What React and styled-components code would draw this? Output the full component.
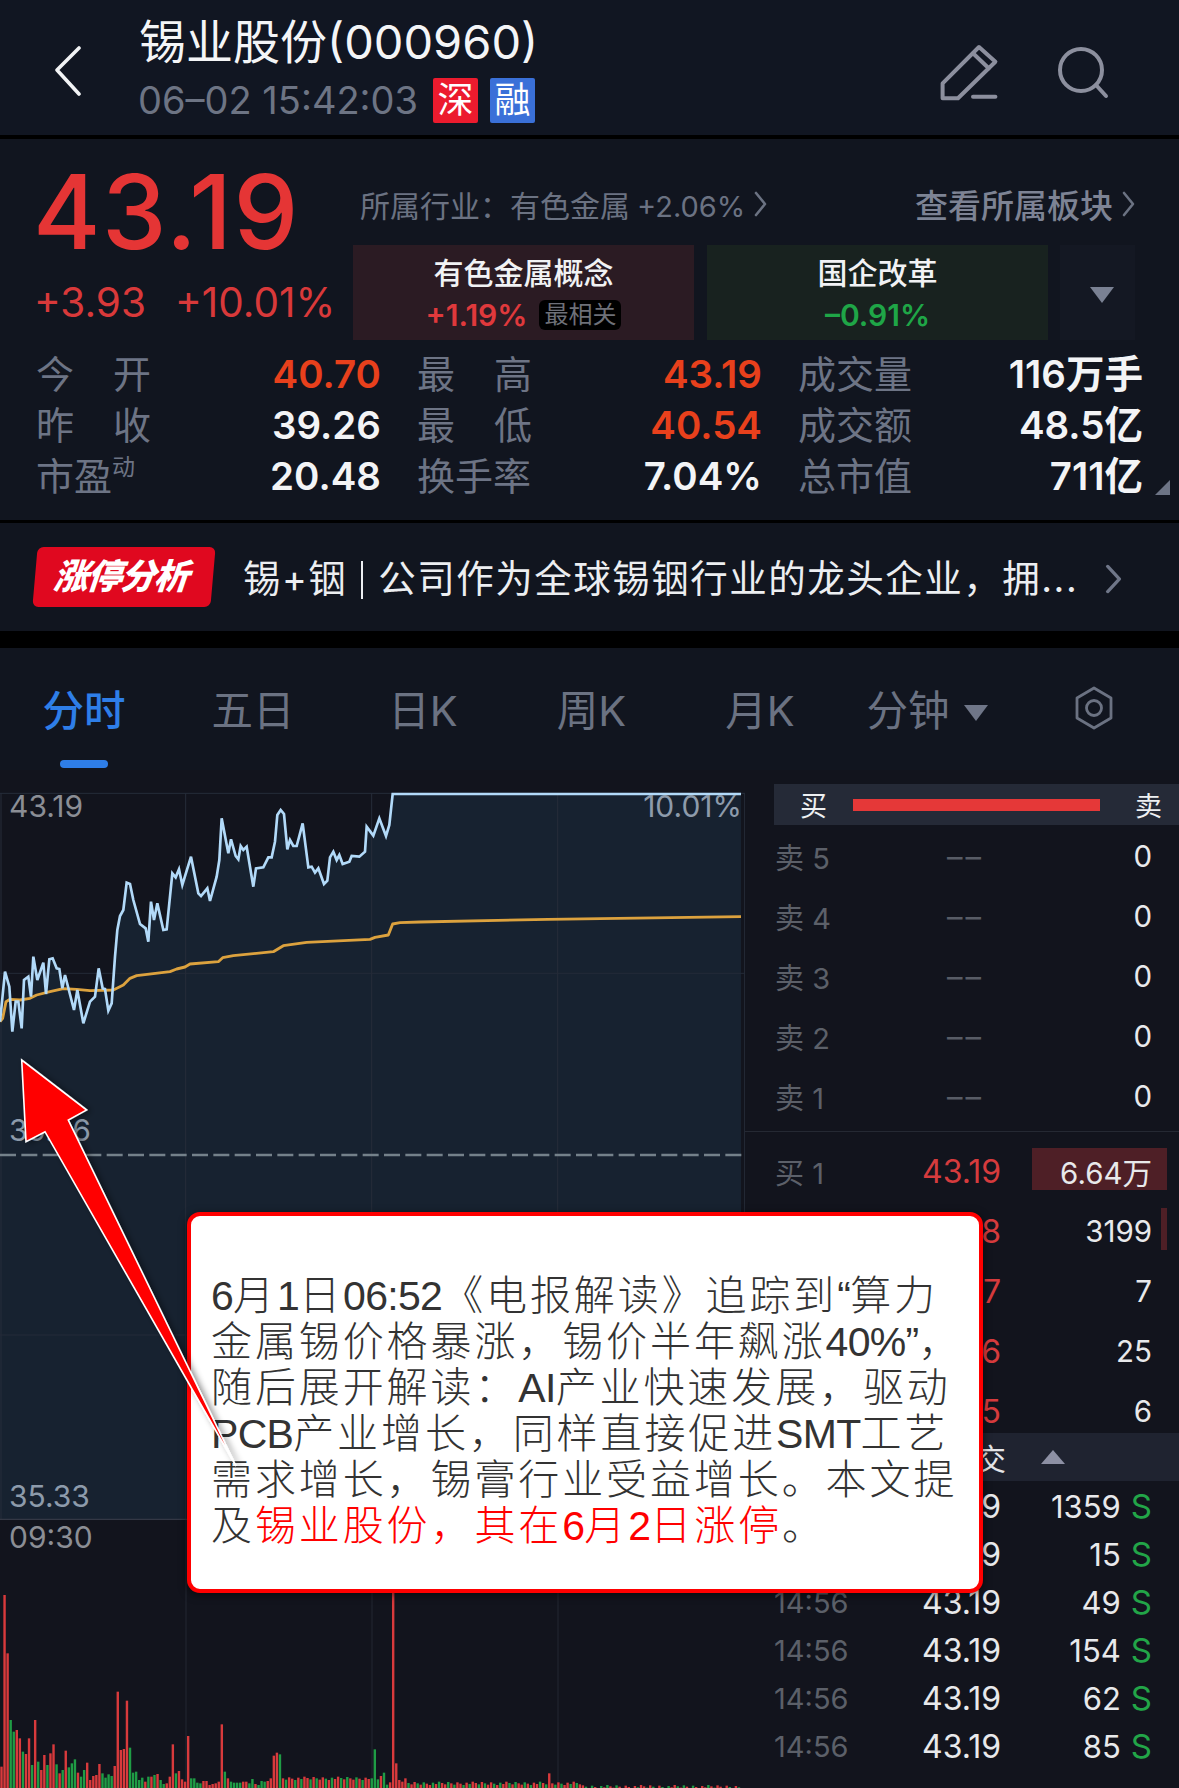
import React from "react";
import styled, { createGlobalStyle } from "styled-components";

const SANS = `Inter, "Noto Sans CJK SC", sans-serif`;

const Global = createGlobalStyle`
  html, body { margin: 0; padding: 0; background: #000; }
  body { font-family: ${SANS}; overflow-x: hidden; }
  * { box-sizing: border-box; }
`;

const Page = styled.div`
  position: relative;
  width: 1179px;
  height: 1788px;
  overflow: hidden;
  background: #000;
  display: flex;
  flex-direction: column;
`;

/* header */
const Header = styled.header`
  height: 135px;
  background: #111622;
  display: flex;
  align-items: flex-start;
`;
const BackSlot = styled.div`
  width: 139px;
  height: 135px;
  padding: 46px 0 0 54px;
`;
const HeaderTitles = styled.div`
  flex: 1;
  display: flex;
  flex-direction: column;
  padding-top: 16px;
`;
const Title = styled.div`
  color: #f4f5f7;
  font-size: 47px;
  line-height: 52px;
  white-space: nowrap;
`;
const SubRow = styled.div`
  display: flex;
  align-items: center;
  margin-top: 9px;
`;
const Timestamp = styled.span`
  color: #6d7484;
  font-size: 38px;
  line-height: 46px;
  width: 295px;
  margin-left: -1px;
  padding-right: 1px;
  white-space: nowrap;
`;
const Tag = styled.span`
  width: 45px;
  height: 45px;
  margin-right: 12px;
  background: ${(p) => p.$bg};
  color: #fff;
  font-size: 36px;
  line-height: 44px;
  text-align: center;
  border-radius: 2px;
`;
const HeaderIcons = styled.div`
  display: flex;
  align-items: flex-start;
  gap: 55px;
  padding: 44px 65px 0 0;
`;

const Rule = styled.div`
  height: ${(p) => p.$h}px;
  background: #000;
  flex: none;
`;

/* quote */
const Quote = styled.section`
  height: 381px;
  background: #11151f;
`;
const QuoteTop = styled.div`
  height: 210px;
  display: flex;
`;
const PriceCol = styled.div`
  width: 353px;
  padding: 23px 0 0 33px;
`;
const BigPrice = styled.div`
  color: #e53535;
  font-size: 103px;
  line-height: 100px;
  font-weight: 500;
  letter-spacing: 1.4px;
`;
const Changes = styled.div`
  display: flex;
  gap: 29px;
  margin-top: 16px;
  padding-left: 1px;
  color: #d9393a;
  font-size: 40.5px;
  line-height: 50px;
  white-space: nowrap;
`;
const RightCol = styled.div`
  flex: 1;
  padding-top: 46px;
`;
const InfoRow = styled.div`
  display: flex;
  align-items: center;
  justify-content: space-between;
  height: 38px;
  padding: 0 44px 0 7px;
`;
const InfoItem = styled.div`
  display: flex;
  align-items: center;
  gap: 9px;
  color: ${(p) => (p.$strong ? "#7d8394" : "#6b7282")};
  font-size: ${(p) => (p.$strong ? "33px" : "30px")};
  font-weight: ${(p) => (p.$strong ? 500 : 400)};
  white-space: nowrap;
`;
const InfoNum = styled.span`
  font-size: 29px;
  margin-left: 7px;
`;
const Cards = styled.div`
  display: flex;
  gap: 13px;
  margin-top: 22px;
`;
const Card = styled.div`
  width: 341px;
  height: 95px;
  background: ${(p) => p.$bg};
  display: flex;
  flex-direction: column;
  align-items: center;
  padding-top: 9px;
`;
const CardName = styled.div`
  color: #f1f2f4;
  font-size: 30px;
  line-height: 38px;
  font-weight: 500;
`;
const CardSub = styled.div`
  display: flex;
  align-items: center;
  gap: 12px;
  margin-top: 4px;
  color: ${(p) => p.$color};
  font-size: 30px;
  line-height: 38px;
  font-weight: 600;
`;
const Badge = styled.span`
  background: #000;
  color: #6e7078;
  font-size: 24px;
  line-height: 30px;
  font-weight: 400;
  padding: 0 5px;
  border-radius: 6px;
`;
const MoreCard = styled.div`
  width: 75px;
  height: 95px;
  margin-left: -1px;
  padding: 4px 0 0 9px;
  background: #141823;
  display: flex;
  align-items: center;
  justify-content: center;
`;
const Stats = styled.div`
  display: grid;
  grid-template-columns: repeat(3, 381px);
  padding-left: 36px;
`;
const Stat = styled.div`
  display: flex;
  align-items: center;
  height: 51px;
`;
const StatLabel = styled.div`
  width: 115px;
  display: flex;
  justify-content: space-between;
  color: #6d7485;
  font-size: 38px;
  line-height: 51px;
  position: relative;
  white-space: nowrap;
`;
const Sup = styled.sup`
  position: absolute;
  left: 76px;
  top: 4px;
  font-size: 23px;
  line-height: 24px;
  color: #6d7485;
`;
const StatValue = styled.div`
  flex: 1;
  text-align: right;
  padding-right: 36px;
  color: ${(p) => (p.$up ? "#e8401c" : "#f3f4f6")};
  font-size: 38.5px;
  line-height: 51px;
  font-weight: 600;
  white-space: nowrap;
`;
const CornerMark = styled.span`
  position: absolute;
  left: 1155px;
  top: 480px;
  width: 0;
  height: 0;
  border-style: solid;
  border-width: 0 0 15px 15px;
  border-color: transparent transparent #6d7485 transparent;
`;

/* banner */
const Banner = styled.section`
  height: 108px;
  background: #11151f;
  display: flex;
  align-items: center;
  padding-left: 35px;
`;
const Logo = styled.div`
  width: 178px;
  height: 60px;
  padding-right: 7px;
  background: #e0081f;
  border-radius: 6px;
  transform: skewX(-5deg);
  color: #fff;
  font-size: 35px;
  font-weight: 900;
  font-style: italic;
  line-height: 58px;
  text-align: center;
  letter-spacing: -1.5px;
  white-space: nowrap;
`;
const BannerText = styled.div`
  margin: 3px 0 0 30px;
  width: 862px;
  color: #eceef1;
  font-size: 37.5px;
  line-height: 50px;
  letter-spacing: 1.5px;
  white-space: nowrap;
`;
const BannerBar = styled.span`
  display: inline-block;
  width: 2px;
  height: 38px;
  margin: 0 15px 0 14px;
  vertical-align: -7px;
  background: #eceef1;
`;
const BannerMore = styled.span`
  display: flex;
  margin-top: 3px;
`;

/* tabs */
const Tabs = styled.nav`
  height: 122px;
  background: #11151f;
  display: flex;
`;
const TabItem = styled.div`
  position: relative;
  flex: none;
  width: ${(p) => p.$w || 170}px;
  height: 122px;
  padding-top: 38px;
  display: flex;
  justify-content: center;
  align-items: flex-start;
  gap: 14px;
  color: ${(p) => (p.$active ? "#2e7ee8" : "#6b7282")};
  font-size: 41.5px;
  line-height: 50px;
  font-weight: ${(p) => (p.$active ? 500 : 400)};
`;
const TabMark = styled.span`
  position: absolute;
  left: 60px;
  top: 112px;
  width: 48px;
  height: 8px;
  border-radius: 4px;
  background: #2e7ee8;
`;
const Caret = styled.span`
  width: 0;
  height: 0;
  margin-top: ${(p) => p.$top || 0}px;
  border-style: solid;
  border-width: ${(p) => (p.$up ? "0 12px 14px" : "16px 12px 0")};
  border-color: ${(p) =>
    p.$up
      ? "transparent transparent #8d90a4"
      : `${p.$color || "#6f7688"} transparent transparent`};
`;

/* market area */
const Market = styled.section`
  flex: 1;
  display: flex;
  background: #12141d;
  min-height: 0;
`;
const ChartCol = styled.div`
  width: 745px;
  flex: none;
  position: relative;
`;
const PriceChart = styled.svg`
  display: block;
  width: 745px;
  height: 750px;
`;
const AxisLabel = styled.span`
  position: absolute;
  left: ${(p) => (p.$right ? "auto" : "9px")};
  right: ${(p) => (p.$right ? "3px" : "auto")};
  top: ${(p) => p.$top}px;
  color: ${(p) => p.$color || "#8b8e95"};
  font-size: 30px;
  line-height: 34px;
`;
const VolumeChart = styled.svg`
  display: block;
  width: 745px;
  height: 268px;
`;

/* order book */
const Book = styled.div`
  flex: 1;
  padding-top: 14px;
`;
const Ratio = styled.div`
  margin-left: 29px;
  height: 41px;
  background: #252a37;
  display: flex;
  align-items: center;
  color: #eef0f2;
  font-size: 27px;
  padding: 0 17px 0 26px;
`;
const RatioBar = styled.div`
  flex: 1;
  height: 12px;
  margin: 0 35px 0 26px;
  background: #e53838;
`;
const Row = styled.div`
  position: relative;
  display: grid;
  grid-template-columns: 100px 126px 1fr;
  align-items: center;
  height: ${(p) => p.$h || 60}px;
  padding: 2px 27px 0 30px;
  font-size: 30px;
  white-space: nowrap;
`;
const RowLabel = styled.span`
  color: #5c6069;
  font-size: 29px;
`;
const TimeCell = styled.span`
  margin-left: -1px;
  color: #5c6069;
  font-size: 29px;
`;
const PriceCell = styled.span`
  position: relative;
  text-align: right;
  color: ${(p) => (p.$red ? "#d63b3d" : "#e8e9eb")};
  font-size: 32px;
`;
const DashCell = styled.span`
  text-align: right;
  color: #585c66;
  padding-right: 17px;
  font-size: 31px;
  letter-spacing: 3px;
`;
const VolCell = styled.span`
  position: relative;
  text-align: right;
  color: #e8e9eb;
  font-size: ${(p) => (p.$big ? "31px" : "29.5px")};
`;
const SideMark = styled.span`
  color: #22a548;
  margin-left: 10px;
  font-size: 33px;
`;
const Depth = styled.span`
  position: absolute;
  right: 12px;
  top: 8px;
  height: 42px;
  background: #4e1f26;
`;
const Separator = styled.div`
  height: 1px;
  margin-top: 6px;
  background: #252933;
`;
const BuySection = styled.div`
  height: 301px;
  padding-top: 8px;
`;
const TradeBand = styled.div`
  height: 48px;
  background: #1f2330;
  display: flex;
  align-items: center;
  justify-content: flex-end;
  padding-right: 114px;
  gap: 35px;
  color: #e4e5e8;
  font-size: 30px;
  white-space: nowrap;
`;

/* overlay */
const Callout = styled.div`
  position: absolute;
  left: 187px;
  top: 1212px;
  width: 796px;
  height: 381px;
  background: #fff;
  border: 4px solid #f00;
  border-radius: 13px;
  padding: 53px 0 0 20px;
  color: #333;
  font-family: "Noto Sans CJK SC", sans-serif;
  font-weight: 300;
  font-size: 41px;
  line-height: 46px;
  letter-spacing: 2.9px;
  white-space: nowrap;
  box-shadow: 0 2px 8px rgba(0, 0, 0, 0.55);
`;
const Latin = styled.span`
  font-family: "Liberation Sans", sans-serif;
  font-weight: 400;
  line-height: 0;
  letter-spacing: -0.7px;
`;
const Red = styled.span`
  color: #f00;
`;
const ArrowLayer = styled.svg`
  position: absolute;
  left: 0;
  top: 1040px;
  width: 260px;
  height: 440px;
  overflow: visible;
`;

const price = [[0,755],[15,605],[28,650],[37,785],[47,695],[55,695],[65,775],[72,630],[85,620],[93,680],[100,560],[112,630],[130,578],[138,672],[148,568],[158,565],[170,595],[178,597],[187,655],[195,615],[222,720],[232,660],[250,760],[270,695],[285,680],[296,595],[308,655],[315,657],[325,722],[335,700],[345,560],[352,480],[360,438],[370,420],[380,338],[390,342],[400,390],[420,462],[437,475],[445,515],[453,395],[462,450],[472,400],[490,480],[500,478],[517,310],[527,322],[537,298],[547,345],[573,260],[595,370],[603,378],[622,355],[630,393],[650,320],[658,270],[665,145],[685,250],[693,208],[707,258],[715,268],[722,228],[730,240],[740,230],[760,350],[768,295],[790,292],[805,262],[815,262],[825,215],[832,135],[842,120],[852,132],[862,238],[870,210],[880,228],[890,228],[908,160],[925,292],[935,290],[945,308],[955,295],[972,342],[982,332],[990,262],[1000,245],[1010,270],[1018,255],[1028,282],[1048,275],[1055,258],[1078,260],[1095,245],[1100,170],[1120,197],[1138,145],[1158,198],[1168,165],[1178,72],[2223,72]];
const avg = [[0,755],[8,745],[18,695],[30,688],[60,690],[90,685],[110,675],[150,665],[190,656],[230,658],[270,662],[340,660],[370,645],[390,625],[410,617],[510,605],[530,597],[555,591],[570,582],[655,575],[668,563],[700,557],[820,545],[850,527],[920,517],[1110,508],[1125,502],[1165,495],[1178,462],[1200,458],[1260,456],[1644,448],[2223,440]];
const toPath = (pts) => pts.map((p) => p.join(",")).join(" ");

const TOPS = [[860,"r"],[345,"r"],[520,"r"],[720,"g"],[755,"g"],[750,"r"],[775,"r"],[815,"g"],[822,"r"],[775,"r"],[855,"g"],[720,"r"],[845,"g"],[870,"r"],[825,"r"],[855,"g"],[820,"r"],[793,"r"],[853,"g"],[880,"r"],[870,"g"],[812,"r"],[862,"g"],[850,"g"],[838,"g"],[878,"r"],[890,"g"],[870,"g"],[848,"r"],[900,"r"],[888,"r"],[885,"r"],[852,"r"],[880,"g"],[893,"g"],[883,"g"],[888,"g"],[858,"r"],[635,"r"],[810,"r"],[807,"r"],[662,"r"],[803,"g"],[878,"g"],[875,"g"],[900,"g"],[893,"g"],[905,"r"],[890,"g"],[890,"r"],[885,"g"],[882,"r"],[900,"g"],[912,"g"],[910,"r"],[890,"r"],[793,"r"],[880,"g"],[873,"r"],[898,"r"],[905,"r"],[768,"r"],[895,"g"],[895,"g"],[908,"g"],[910,"g"],[903,"r"],[903,"r"],[915,"r"],[912,"r"],[910,"r"],[905,"r"],[733,"r"],[875,"g"],[895,"r"],[905,"g"],[908,"g"],[908,"g"],[908,"g"],[905,"r"],[905,"r"],[910,"g"],[897,"g"],[912,"r"],[915,"g"],[903,"g"],[905,"g"],[903,"r"],[895,"r"],[827,"r"],[818,"r"],[823,"g"]];
const OVERRIDE = { 121: [895, "g"], 122: [808, "g"], 124: [888, "r"], 125: [878, "g"], 128: [200, "r"], 129: [850, "r"], 130: [900, "r"], 131: [905, "r"], 132: [895, "r"], 179: [880, "r"] };
const bars = Array.from({ length: 242 }, (_, i) => {
  if (OVERRIDE[i]) return OVERRIDE[i];
  if (i < TOPS.length) return TOPS[i];
  const n = (i * 37) % 11;
  const base = i < 125 ? 890 : i < 190 ? 905 : 915;
  return [base + n, (i * 13) % 5 < 3 ? "r" : "g"];
});

const Pencil = () => (
  <svg width="60" height="60" viewBox="0 0 60 60" fill="none" stroke="#8c8f9e" strokeWidth="4" strokeLinejoin="round" strokeLinecap="round">
    <path d="M40 3 L56.4 17.7 L19 54.3 H3.6 V39.3 Z" />
    <path d="M34 9.3 L49.7 24.3" />
    <path d="M34 52.7 H56.4" />
  </svg>
);
const Search = () => (
  <svg width="60" height="60" viewBox="0 0 60 60" fill="none" stroke="#8c8f9e" strokeWidth="4" strokeLinecap="round">
    <circle cx="27" cy="26" r="21" />
    <path d="M42 41 L52 52" />
  </svg>
);
const Back = () => (
  <svg width="30" height="54" viewBox="0 0 30 54" fill="none" stroke="#f2f3f5" strokeWidth="3.6" strokeLinecap="round" strokeLinejoin="round">
    <path d="M25 2 L3 24 L25 48" />
  </svg>
);
const Chevron = ({ w = 13, h = 26, color = "#6b7282", sw = 2.6 }) => (
  <svg width={w} height={h} viewBox="0 0 13 26" fill="none" stroke={color} strokeWidth={sw} strokeLinecap="round" strokeLinejoin="round" preserveAspectRatio="none">
    <path d="M2 2 L11 13 L2 24" />
  </svg>
);
const Hex = () => (
  <svg width="38" height="44" viewBox="0 0 38 44" fill="none" stroke="#6b7282" strokeWidth="2.8" strokeLinejoin="round">
    <path d="M19 2 L36 12 V32 L19 42 L2 32 V12 Z" />
    <circle cx="19" cy="22" r="7.5" />
  </svg>
);

const StatData = [
  [["今", "开"], "40.70", true],
  [["最", "高"], "43.19", true],
  [["成交量"], "116万手", false],
  [["昨", "收"], "39.26", false],
  [["最", "低"], "40.54", true],
  [["成交额"], "48.5亿", false],
  [["市盈"], "20.48", false, "动"],
  [["换手率"], "7.04%", false],
  [["总市值"], "711亿", false],
];
const asks = ["5", "4", "3", "2", "1"];
const bids = [
  ["1", "43.19", "6.64万", 135],
  ["2", "43.18", "3199", 6],
  ["3", "43.17", "7", 0],
  ["4", "43.16", "25", 0],
  ["5", "43.15", "6", 0],
];
const trades = [
  ["14:57", "1359"],
  ["14:56", "15"],
  ["14:56", "49"],
  ["14:56", "154"],
  ["14:56", "62"],
  ["14:56", "85"],
];

export default function App() {
  return (
    <Page>
      <Global />
      <Header>
        <BackSlot><Back /></BackSlot>
        <HeaderTitles>
          <Title>锡业股份(000960)</Title>
          <SubRow>
            <Timestamp>06–02 15:42:03</Timestamp>
            <Tag $bg="#ec1b2e">深</Tag>
            <Tag $bg="#3a70d8">融</Tag>
          </SubRow>
        </HeaderTitles>
        <HeaderIcons><Pencil /><Search /></HeaderIcons>
      </Header>
      <Rule $h={4} />
      <Quote>
        <QuoteTop>
          <PriceCol>
            <BigPrice>43.19</BigPrice>
            <Changes><span>+3.93</span><span>+10.01%</span></Changes>
          </PriceCol>
          <RightCol>
            <InfoRow>
              <InfoItem><span>所属行业：有色金属<InfoNum>+2.06%</InfoNum></span><Chevron /></InfoItem>
              <InfoItem $strong>查看所属板块<Chevron /></InfoItem>
            </InfoRow>
            <Cards>
              <Card $bg="#2b1b23">
                <CardName>有色金属概念</CardName>
                <CardSub $color="#e0393c">+1.19%<Badge>最相关</Badge></CardSub>
              </Card>
              <Card $bg="#18221f">
                <CardName>国企改革</CardName>
                <CardSub $color="#1fa647">–0.91%</CardSub>
              </Card>
              <MoreCard><Caret $color="#7a8193" /></MoreCard>
            </Cards>
          </RightCol>
        </QuoteTop>
        <Stats>
          {StatData.map(([label, value, up, sup]) => (
            <Stat key={label.join("") + value}>
              <StatLabel>
                {label.map((l) => <span key={l}>{l}</span>)}
                {sup && <Sup>{sup}</Sup>}
              </StatLabel>
              <StatValue $up={up}>{value}</StatValue>
            </Stat>
          ))}
        </Stats>
      </Quote>
      <CornerMark />
      <Rule $h={3} />
      <Banner>
        <Logo>涨停分析</Logo>
        <BannerText>锡+铟<BannerBar />公司作为全球锡铟行业的龙头企业，拥...</BannerText>
        <BannerMore><Chevron w={17} h={30} color="#6f7688" sw={2.6} /></BannerMore>
      </Banner>
      <Rule $h={17} />
      <Tabs>
        <TabItem $active $w={168}>分时<TabMark /></TabItem>
        <TabItem>五日</TabItem>
        <TabItem>日K</TabItem>
        <TabItem $w={167}>周K</TabItem>
        <TabItem>月K</TabItem>
        <TabItem $w={164}>分钟<Caret $top={19} /></TabItem>
        <TabItem $w={170}><Hex /></TabItem>
      </Tabs>
      <Market>
        <ChartCol>
          <PriceChart viewBox="0 0 2235 2250">
            <rect x="0" y="70" width="2235" height="2180" fill="#12141d" />
            <polygon points={`${toPath(price)} 2223,2250 0,2250`} fill="#172230" />
            {[186, 372, 558, 745].map((x) => (
              <line key={x} x1={x * 3 - 1} x2={x * 3 - 1} y1="70" y2="2250" stroke="#262d3a" strokeWidth="3" />
            ))}
            <line x1="3" x2="3" y1="70" y2="2250" stroke="#262d3a" strokeWidth="3" />
            <line x1="0" x2="2235" y1="70" y2="70" stroke="#262d3a" strokeWidth="3" />
            <line x1="0" x2="2235" y1="610" y2="610" stroke="#242b38" strokeWidth="3" />
            <line x1="0" x2="2235" y1="1155" y2="1155" stroke="#74818a" strokeWidth="7" strokeDasharray="48 16" />
            <line x1="0" x2="2235" y1="1695" y2="1695" stroke="#242b38" strokeWidth="3" />
            <line x1="0" x2="2235" y1="2248" y2="2248" stroke="#343845" strokeWidth="4" />
            <polyline points={toPath(avg)} fill="none" stroke="#dca23e" strokeWidth="8.5" strokeLinejoin="round" />
            <polyline points={toPath(price)} fill="none" stroke="#b2daf9" strokeWidth="8" strokeLinejoin="miter" />
          </PriceChart>
          <AxisLabel $top={19}>43.19</AxisLabel>
          <AxisLabel $top={19} $right $color="#8d9bab">10.01%</AxisLabel>
          <AxisLabel $top={343} $color="#8d9bab">39.26</AxisLabel>
          <AxisLabel $top={709} $color="#8d9bab">35.33</AxisLabel>
          <AxisLabel $top={750}>09:30</AxisLabel>
          <VolumeChart viewBox="0 0 745 268">
            {[186, 372, 558].map((x) => (
              <line key={x} x1={x} x2={x} y1="0" y2="268" stroke="#232733" strokeWidth="1" />
            ))}
            {bars.map(([top, c], i) => {
              const y = 1480 + top / 3 - 1520;
              return (
                <rect key={i} x={i * 3.06 + 0.3} y={y} width="2.4" height={268 - y} fill={c === "r" ? "#d83a3c" : "#1f9c45"} />
              );
            })}
          </VolumeChart>
        </ChartCol>
        <Book>
          <Ratio>买<RatioBar />卖</Ratio>
          {asks.map((n) => (
            <Row key={n}>
              <RowLabel>卖 {n}</RowLabel>
              <DashCell>––</DashCell>
              <VolCell>0</VolCell>
            </Row>
          ))}
          <Separator />
          <BuySection>
            {bids.map(([n, p, v, d]) => (
              <Row key={n}>
                {d > 0 && <Depth style={{ width: d }} />}
                <RowLabel>买 {n}</RowLabel>
                <PriceCell $red>{p}</PriceCell>
                <VolCell>{v}</VolCell>
              </Row>
            ))}
          </BuySection>
          <TradeBand>逐笔成交<Caret $up /></TradeBand>
          {trades.map(([t, v], i) => (
            <Row key={i} $h={48}>
              <TimeCell>{t}</TimeCell>
              <PriceCell>43.19</PriceCell>
              <VolCell $big>{v}<SideMark>S</SideMark></VolCell>
            </Row>
          ))}
        </Book>
      </Market>
      <Callout>
        <Latin>6</Latin>月<Latin>1</Latin>日<Latin>06:52</Latin>《电报解读》追踪到<Latin>“</Latin>算力<br />
        金属锡价格暴涨，锡价半年飙涨<Latin>40%”</Latin>，<br />
        随后展开解读：<Latin>AI</Latin>产业快速发展，驱动<br />
        <Latin>PCB</Latin>产业增长，同样直接促进<Latin>SMT</Latin>工艺<br />
        需求增长，锡膏行业受益增长。本文提<br />
        及<Red>锡业股份，其在<Latin>6</Latin>月<Latin>2</Latin>日涨停</Red>。
      </Callout>
      <ArrowLayer viewBox="0 0 260 440">
        <defs>
          <filter id="arrowShadow" x="-20%" y="-20%" width="140%" height="140%">
            <feDropShadow dx="3" dy="1" stdDeviation="3" floodColor="#000" floodOpacity="0.45" />
          </filter>
        </defs>
        <polygon
          points="21.7,20 86.7,70 68.3,80 236,426 45,91.7 26,101.7"
          fill="#f00"
          stroke="#fff"
          strokeWidth="1.6"
          strokeLinejoin="miter"
          filter="url(#arrowShadow)"
        />
      </ArrowLayer>
    </Page>
  );
}
